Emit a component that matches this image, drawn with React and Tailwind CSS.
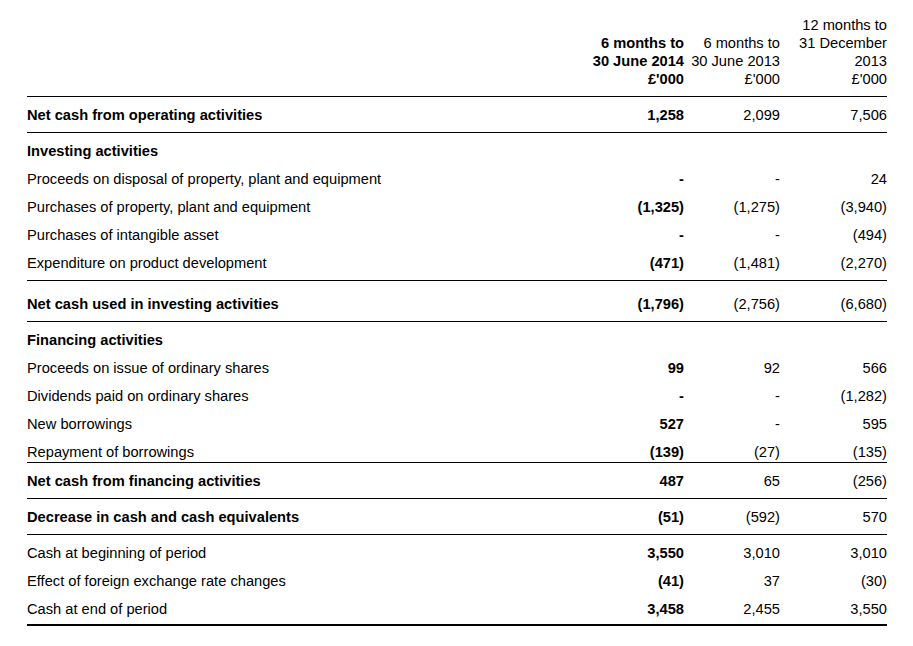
const sections = [
  {
    kind: 'total',
    label: 'Net cash from operating activities',
    values: ['1,258', '2,099', '7,506'],
    cls: 'pt-[9px] pb-[8px] border-b border-black',
  },
  {
    kind: 'group',
    heading: 'Investing activities',
    cls: 'pt-[4px] pb-[3px] border-b border-black',
    rows: [
      ['Proceeds on disposal of property, plant and equipment', '-', '-', '24'],
      ['Purchases of property, plant and equipment', '(1,325)', '(1,275)', '(3,940)'],
      ['Purchases of intangible asset', '-', '-', '(494)'],
      ['Expenditure on product development', '(471)', '(1,481)', '(2,270)'],
    ],
  },
  {
    kind: 'total',
    label: 'Net cash used in investing activities',
    values: ['(1,796)', '(2,756)', '(6,680)'],
    cls: 'pt-[14px] pb-[8px] border-b border-black',
  },
  {
    kind: 'group',
    heading: 'Financing activities',
    cls: 'pt-[4px] border-b border-black',
    lastCls: 'h-[24px] pt-[5px] items-start',
    rows: [
      ['Proceeds on issue of ordinary shares', '99', '92', '566'],
      ['Dividends paid on ordinary shares', '-', '-', '(1,282)'],
      ['New borrowings', '527', '-', '595'],
      ['Repayment of borrowings', '(139)', '(27)', '(135)'],
    ],
  },
  {
    kind: 'total',
    label: 'Net cash from financing activities',
    values: ['487', '65', '(256)'],
    cls: 'pt-[9px] pb-[8px] border-b border-black',
  },
  {
    kind: 'total',
    label: 'Decrease in cash and cash equivalents',
    values: ['(51)', '(592)', '570'],
    cls: 'pt-[9px] pb-[8px] border-b border-black',
  },
  {
    kind: 'group',
    cls: 'pt-[4px] pb-[2px] border-b-2 border-black',
    lastCls: 'h-[27px] items-center',
    rows: [
      ['Cash at beginning of period', '3,550', '3,010', '3,010'],
      ['Effect of foreign exchange rate changes', '(41)', '37', '(30)'],
      ['Cash at end of period', '3,458', '2,455', '3,550'],
    ],
  },
];

function Cells({ values }) {
  return (
    <>
      <div className="w-[96px] text-right font-bold">{values[0]}</div>
      <div className="w-[96px] text-right">{values[1]}</div>
      <div className="w-[107px] text-right">{values[2]}</div>
    </>
  );
}

export default function App() {
  return (
    <div className="w-[913px] h-[646px] bg-white text-black text-[14.67px] leading-[18px] font-['Liberation_Sans',Arial,sans-serif]">
      <div className="ml-[27px] w-[862px] pr-[2px] pt-[16px]">
        <div className="flex items-end pb-[8px] border-b border-black">
          <div className="flex-1" />
          <div className="w-[96px] text-right font-bold">
            6 months to
            <br />
            30 June 2014
            <br />
            £'000
          </div>
          <div className="w-[96px] text-right">
            6 months to
            <br />
            30 June 2013
            <br />
            £'000
          </div>
          <div className="w-[107px] text-right">
            12 months to
            <br />
            31 December
            <br />
            2013
            <br />
            £'000
          </div>
        </div>

        {sections.map((s, i) =>
          s.kind === 'total' ? (
            <div key={i} className={`flex ${s.cls}`}>
              <div className="flex-1 font-bold">{s.label}</div>
              <Cells values={s.values} />
            </div>
          ) : (
            <div key={i} className={s.cls}>
              {s.heading && (
                <div className="h-[28px] flex items-center font-bold">{s.heading}</div>
              )}
              {s.rows.map((r, j) => {
                const last = j === s.rows.length - 1;
                return (
                  <div
                    key={j}
                    className={`flex ${last && s.lastCls ? s.lastCls : 'h-[28px] items-center'}`}
                  >
                    <div className="flex-1">{r[0]}</div>
                    <Cells values={r.slice(1)} />
                  </div>
                );
              })}
            </div>
          )
        )}
      </div>
    </div>
  );
}
